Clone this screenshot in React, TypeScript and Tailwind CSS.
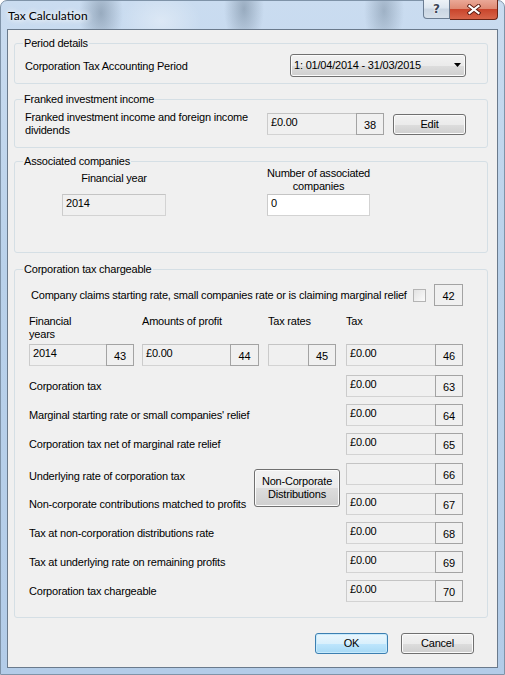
import React from "react";

const F = "font-['Liberation_Sans',Arial,sans-serif]";

function Legend({ children }: { children: React.ReactNode }) {
  return <legend className="ml-[8px] px-[1px] leading-[15px]">{children}</legend>;
}

const group = "border border-[#d5dfe5] rounded-[3px] ml-[6px] mr-[9px]";

function Val({ className = "", children, white = false }: { className?: string; children?: React.ReactNode; white?: boolean }) {
  return (
    <div
      className={`shrink-0 h-[22px] border border-[#d3d3d3] border-t-[#c4c4c4] border-l-[#cbcbcb] ${white ? "bg-white" : "bg-[#f0f0f0]"} pl-[3px] pt-[2px] leading-[13px] whitespace-nowrap overflow-hidden ${className}`}
    >
      {children}
    </div>
  );
}

function Num({ className = "w-[28px]", children }: { className?: string; children?: React.ReactNode }) {
  return (
    <div className={`shrink-0 h-[22px] border border-[#a3a3a3] pt-[5px] text-center leading-[13px] ${className}`}>{children}</div>
  );
}

function Btn({ className = "", children }: { className?: string; children: React.ReactNode }) {
  return (
    <div
      className={`shrink-0 flex items-center justify-center text-center whitespace-nowrap leading-[13px] rounded-[3px] border border-[#707070] bg-[linear-gradient(to_bottom,#f2f2f2_0%,#ebebeb_50%,#dddddd_51%,#cfcfcf_100%)] shadow-[inset_0_0_0_1px_#fbfbfb] ${className}`}
    >
      {children}
    </div>
  );
}

function TaxRow({ label, num, mt }: { label: string; num: string; mt: string }) {
  return (
    <div className={`flex items-center h-[22px] pl-[14px] pr-[24px] ${mt}`}>
      <div className="flex-1 min-w-0 whitespace-nowrap pt-[1px]">{label}</div>
      <Val className="w-[89px] border-r-0">£0.00</Val>
      <Num className="w-[28px]">{num}</Num>
    </div>
  );
}

export default function App() {
  return (
    <div
      className={`w-[505px] h-[675px] flex flex-col px-[6px] pb-[6px] border border-[#7f93a8] rounded-t-[7px] bg-[image:radial-gradient(ellipse_22px_38px_at_100px_12px,rgba(60,80,100,0.35),transparent),radial-gradient(ellipse_20px_40px_at_243px_8px,rgba(60,80,100,0.35),transparent),radial-gradient(ellipse_20px_40px_at_383px_10px,rgba(60,80,100,0.3),transparent),radial-gradient(ellipse_40px_30px_at_160px_20px,rgba(255,255,255,0.35),transparent),linear-gradient(to_bottom,#cadcf0,#b9d1ea_40%,#b3cce8)] ${F} text-[11px] tracking-[-0.2px] leading-[13px] text-black`}
    >
      {/* Title bar */}
      <div className="h-[28px] flex items-start justify-between">
        <div className="pl-[1px] h-[28px] flex items-center font-['Lato','Open_Sans',sans-serif] text-[12px] tracking-normal text-black [text-shadow:0_0_6px_#fff,0_0_6px_#fff]">
          Tax Calculation
        </div>
        <div className="flex -mt-[1px]">
          <div className="w-[27px] h-[19px] rounded-bl-[4px] border border-[#6b7d92] border-t-0 bg-[linear-gradient(to_bottom,#edf2f7_0%,#dde6ef_45%,#c9d5e2_50%,#d6e0ea_100%)] flex items-center justify-center">
            <span className="font-['DejaVu_Sans',sans-serif] font-bold text-[12px] leading-[12px] tracking-normal text-[#3b4656] [text-shadow:0_0_2px_#fff,0_0_2px_#fff]">?</span>
          </div>
          <div className="w-[48px] h-[20px] rounded-br-[4px] border border-[#6a2416] border-t-0 border-l-0 bg-[linear-gradient(to_bottom,#eaa897_0%,#df8a74_45%,#c9452c_50%,#d7654a_100%)] flex items-center justify-center">
            <svg width="14" height="11" viewBox="0 0 14 11">
              <path d="M2.5 2 L11.5 9 M11.5 2 L2.5 9" stroke="#5a1a10" strokeWidth="4" strokeLinecap="square" />
              <path d="M2.5 2 L11.5 9 M11.5 2 L2.5 9" stroke="#ffffff" strokeWidth="2.2" strokeLinecap="square" />
            </svg>
          </div>
        </div>
      </div>

      {/* Client area */}
      <div className="flex-1 border border-[#6a7a8c] bg-[#f0f0f0] flex flex-col">
        {/* Period details */}
        <fieldset className={`${group} mt-[6px]`}>
          <Legend>Period details</Legend>
          <div className="flex items-center justify-between h-[22px] mt-[3px] mb-[7px] pl-[10px] pr-[21px]">
            <div className="whitespace-nowrap pt-[2px]">Corporation Tax Accounting Period</div>
            <div className="w-[176px] h-[23px] flex items-center justify-between pl-[3px] pr-[4px] rounded-[3px] border border-[#707070] bg-[linear-gradient(to_bottom,#f2f2f2_0%,#ebebeb_50%,#dddddd_51%,#cfcfcf_100%)] shadow-[inset_0_0_0_1px_#fbfbfb]">
              <span className="whitespace-nowrap">1: 01/04/2014 - 31/03/2015</span>
              <svg width="7" height="4" viewBox="0 0 7 4">
                <path d="M0 0 H7 L3.5 4 Z" fill="#000" />
              </svg>
            </div>
          </div>
        </fieldset>

        {/* Franked investment income */}
        <fieldset className={`${group} mt-[8px]`}>
          <Legend>Franked investment income</Legend>
          <div className="h-[40px] flex items-start pt-[4px] pl-[10px]">
            <div className="w-[242px] shrink-0 whitespace-nowrap">
              Franked investment income and foreign income
              <br />
              dividends
            </div>
            <div className="flex mt-[2px]">
              <Val className="w-[89px] border-r-0">£0.00</Val>
              <Num className="w-[28px]">38</Num>
            </div>
            <Btn className="ml-[9px] mt-[3px] w-[73px] h-[21px]">Edit</Btn>
          </div>
        </fieldset>

        {/* Associated companies */}
        <fieldset className={`${group} mt-[6px]`}>
          <Legend>Associated companies</Legend>
          <div className="h-[83px] flex">
            <div className="ml-[47px] w-[104px] flex flex-col">
              <div className="h-[26px] -mt-[2px] pt-[5px] text-center whitespace-nowrap">Financial year</div>
              <Val className="w-[104px] mt-[1px]">2014</Val>
            </div>
            <div className="ml-[101px] w-[103px] flex flex-col">
              <div className="h-[26px] -mt-[2px] flex flex-col items-center whitespace-nowrap">
                <span>Number of associated</span>
                <span>companies</span>
              </div>
              <Val className="w-[103px] mt-[1px]" white>
                0
              </Val>
            </div>
          </div>
        </fieldset>

        {/* Corporation tax chargeable */}
        <fieldset className={`${group} mt-[9px]`}>
          <Legend>Corporation tax chargeable</Legend>
          <div className="flex flex-col pb-[15px]">
            <div className="flex items-center h-[22px] mt-[7px] pl-[16px] pr-[24px]">
              <div className="flex-1 min-w-0 whitespace-nowrap">
                Company claims starting rate, small companies rate or is claiming marginal relief
              </div>
              <div className="shrink-0 w-[13px] h-[13px] border border-[#b4b4b4] bg-[linear-gradient(135deg,#e2e2e2,#fbfbfb)]" />
              <Num className="w-[29px] ml-[8px]">42</Num>
            </div>

            <div className="flex pl-[14px] mt-[9px]">
              <div className="w-[113px]">
                Financial
                <br />
                years
              </div>
              <div className="w-[126px] whitespace-nowrap">Amounts of profit</div>
              <div className="w-[78px] whitespace-nowrap">Tax rates</div>
              <div>Tax</div>
            </div>

            <div className="flex pl-[14px] mt-[3px]">
              <Val className="w-[77px] border-r-0">2014</Val>
              <Num className="w-[28px]">43</Num>
              <Val className="w-[88px] border-r-0 ml-[8px]">£0.00</Val>
              <Num className="w-[29px]">44</Num>
              <Val className="w-[40px] border-r-0 ml-[9px]"></Val>
              <Num className="w-[28px]">45</Num>
              <Val className="w-[89px] border-r-0 ml-[10px]">£0.00</Val>
              <Num className="w-[28px]">46</Num>
            </div>

            <TaxRow label="Corporation tax" num="63" mt="mt-[9px]" />
            <TaxRow label="Marginal starting rate or small companies' relief" num="64" mt="mt-[7px]" />
            <TaxRow label="Corporation tax net of marginal rate relief" num="65" mt="mt-[7px]" />

            <div className="flex pl-[14px] pr-[24px] mt-[8px]">
              <div className="w-[225px] shrink-0 flex flex-col">
                <div className="h-[22px] flex items-center pt-[5px] whitespace-nowrap">Underlying rate of corporation tax</div>
                <div className="h-[22px] mt-[8px] flex items-center pt-[1px] whitespace-nowrap">
                  Non-corporate contributions matched to profits
                </div>
              </div>
              <Btn className="w-[86px] h-[38px] mt-[6px] flex-col">
                <span>Non-Corporate</span>
                <span>Distributions</span>
              </Btn>
              <div className="ml-[6px] flex flex-col">
                <div className="flex">
                  <Val className="w-[89px] border-r-0"></Val>
                  <Num className="w-[28px]">66</Num>
                </div>
                <div className="flex mt-[8px]">
                  <Val className="w-[89px] border-r-0">£0.00</Val>
                  <Num className="w-[28px]">67</Num>
                </div>
              </div>
            </div>

            <TaxRow label="Tax at non-corporation distributions rate" num="68" mt="mt-[7px]" />
            <TaxRow label="Tax at underlying rate on remaining profits" num="69" mt="mt-[7px]" />
            <TaxRow label="Corporation tax chargeable" num="70" mt="mt-[7px]" />
          </div>
        </fieldset>

        {/* Buttons */}
        <div className="flex justify-end gap-[13px] pr-[23px] mt-[15px]">
          <div className="w-[73px] h-[21px] flex items-center justify-center rounded-[3px] border border-[#3c7fb1] bg-[linear-gradient(to_bottom,#eaf6fd_0%,#d9f0fc_50%,#bee6fd_51%,#a7d9f5_100%)] shadow-[inset_0_0_0_1px_#c7eafc]">
            OK
          </div>
          <Btn className="w-[73px] h-[21px]">Cancel</Btn>
        </div>
      </div>
    </div>
  );
}
